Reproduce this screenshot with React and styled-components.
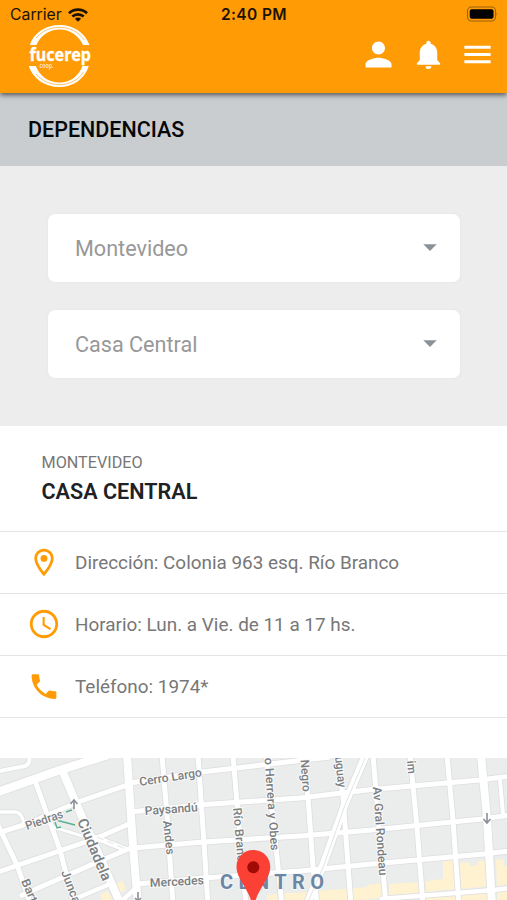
import styled, { createGlobalStyle } from 'styled-components'
import {
  MdAccessTime,
  MdArrowDropDown,
  MdMenu,
  MdNotifications,
  MdOutlineLocationOn,
  MdPerson,
  MdPhone
} from 'react-icons/md'

const GlobalStyle = createGlobalStyle`
  * {
    box-sizing: border-box;
  }

  body {
    margin: 0;
    background: #fff;
    font-family: Roboto, 'Liberation Sans', sans-serif;
  }
`

const Screen = styled.div`
  display: flex;
  flex-direction: column;
  width: 507px;
  height: 900px;
  overflow: hidden;
  background: #fff;
`

const Header = styled.header`
  position: relative;
  z-index: 1;
  height: 93px;
  flex-shrink: 0;
  background: #ff9b04;
  box-shadow: 0 2px 5px rgba(0, 0, 0, 0.6);
`

const StatusBar = styled.div`
  display: grid;
  grid-template-columns: 1fr auto 1fr;
  align-items: center;
  height: 29px;
  padding: 0 9px 0 10px;
  font-family: Inter, sans-serif;
  font-size: 15.8px;
  color: #1c1203;
`

const Carrier = styled.div`
  display: flex;
  align-items: center;
  gap: 6px;
`

const Clock = styled.div`
  font-size: 15.5px;
  font-weight: 600;
  letter-spacing: 0.4px;
`

const Battery = styled.svg`
  justify-self: end;
  margin-bottom: 2px;
`

const NavBar = styled.nav`
  display: flex;
  align-items: center;
  justify-content: space-between;
  height: 50px;
  padding: 0 12.5px 0 26px;
  color: #fff;
`

const LogoMark = styled.svg`
  margin-top: 4px;
  overflow: visible;
`

const NavIcons = styled.div`
  display: flex;
  align-items: center;
  gap: 13.5px;

  svg {
    display: block;
  }
`

const TitleBar = styled.div`
  display: flex;
  align-items: center;
  height: 73px;
  flex-shrink: 0;
  padding: 0 28px;
  background: #cacdd0;
`

const PageTitle = styled.h1`
  margin: 0;
  font-size: 21.5px;
  line-height: 25px;
  font-weight: 500;
  color: #060708;
`

const Filters = styled.section`
  display: flex;
  flex-direction: column;
  gap: 28px;
  height: 260px;
  flex-shrink: 0;
  padding: 48px 47px 0 48px;
  background: #ededed;
`

const Select = styled.div`
  display: flex;
  align-items: center;
  justify-content: space-between;
  height: 68px;
  padding: 0 14px 0 27px;
  border-radius: 7px;
  background: #fff;
  box-shadow: 0 0 3px rgba(0, 0, 0, 0.05);
  font-size: 21.6px;
  color: #989898;

  svg {
    margin-bottom: 2px;
    color: #8b9297;
  }
`

const BranchHeading = styled.div`
  height: 106px;
  flex-shrink: 0;
  padding: 27px 41.5px 0;
  border-bottom: 1px solid #e4e4e4;
`

const City = styled.div`
  font-size: 16.2px;
  line-height: 20px;
  color: #777;
`

const BranchName = styled.h2`
  margin: 5px 0 0;
  font-size: 21.6px;
  line-height: 28px;
  font-weight: 600;
  color: #202124;
`

const InfoRow = styled.div`
  display: flex;
  align-items: center;
  height: 62px;
  flex-shrink: 0;
  padding: 0 0 1px 27px;
  border-bottom: 1px solid #e4e4e4;
  font-size: 18.9px;
  color: #777;

  svg {
    width: 34px;
    margin-right: 14px;
    color: #ff9b04;
  }
`

const Map = styled.svg`
  display: block;
  flex-shrink: 0;
  margin-top: 40px;
  font-family: Roboto, sans-serif;
`

const branch = { city: 'Montevideo', name: 'Casa Central' }

const info = [
  { icon: MdOutlineLocationOn, size: 33, text: 'Dirección: Colonia 963 esq. Río Branco' },
  { icon: MdAccessTime, size: 34, text: 'Horario: Lun. a Vie. de 11 a 17 hs.' },
  { icon: MdPhone, size: 33, text: 'Teléfono: 1974*' }
]

const roads = [
  // main avenues
  { w: 8.5, d: 'M-5 793 L60 770 L108 755' },
  { w: 8, d: 'M62 770 L76 803 L121 905' },
  { w: 8, d: 'M127 755 L133 846 L138 905' },
  { w: 8, d: 'M481 755 L487 818 L492 905' },
  // west side
  { w: 4, d: 'M-5 772 L25 766 Q31 764 29 755' },
  { w: 5, d: 'M34 778 L60 850 L74 905' },
  { w: 5, d: 'M-2 825 L17 865 L31 905' },
  { w: 5, d: 'M-5 834 L27 824 L78 802 L133 783' },
  { w: 3.5, d: 'M-5 812 L16 812 Q22 813 24 824' },
  { w: 5, d: 'M-5 873 L97 838 L131 823' },
  { w: 5, d: 'M20 896 L93 864 L133 847' },
  { w: 4.5, d: 'M72 900 L110 884' },
  { w: 4.5, d: 'M123 900 L138 886' },
  { w: 3, d: 'M53 827 L92 839' },
  { w: 5.5, d: 'M94 837 L127 850' },
  // west-east streets
  { w: 5, d: 'M130 783 L202 772 L270 764 L330 757' },
  { w: 5, d: 'M130 812 L198 805 L300 798 L367 790 L480 780 L510 776' },
  { w: 5, d: 'M133 848 L203 842 L300 836 L372 830 L482 819 L510 815' },
  { w: 5, d: 'M137 884 L203 878 L300 871 L372 864 L484 854 L510 851' },
  { w: 4.5, d: 'M380 899 L494 890 L510 888' },
  // north-south streets
  { w: 5, d: 'M162 755 L167 815 L173 905' },
  { w: 5, d: 'M198 755 L204 843 L208 905' },
  { w: 5, d: 'M233 755 L237 803 L246 905' },
  { w: 5, d: 'M266 755 L275 838 L282 905' },
  { w: 5, d: 'M303 755 L308 797 L313 867 L317 905' },
  { w: 5, d: 'M338 755 L343 797 L348 865 L351 905' },
  { w: 7.5, d: 'M367 752 L345 804 L323 865 L307 905' },
  { w: 5, d: 'M373 755 L379 827 L386 905' },
  { w: 5, d: 'M410 755 L417 827 L423 905' },
  { w: 5, d: 'M447 755 L453 820 L459 905' },
  { w: 4, d: 'M500 780 L503 814' }
]

const plots = [
  'M100 895 L108 891 L112 900 L102 900 Z',
  'M116 885 L122 880 L126 889 L119 894 Z',
  'M267 895 L380 886 L380 898 L330 904 L267 905 Z',
  'M285 893 L300 893 L300 900 L285 900 Z',
  'M367 885 L384 883 L384 897 L367 898 Z',
  'M389 884 L419 882 L419 893 L389 895 Z',
  'M426 881 L443 879 L443 861 L455 860 L456 889 L426 892 Z',
  'M460 863 L469 862 L470 866 L478 865 L478 861 L487 860 L490 886 L461 889 Z',
  'M496 860 L504 859 L504 866 L510 866 L510 884 L497 886 Z',
  'M426 896 L456 893 L456 905 L426 905 Z',
  'M461 893 L490 891 L490 905 L461 905 Z',
  'M497 891 L510 890 L510 905 L497 905 Z'
]

const labels = [
  { text: 'Cerro Largo', x: 140, y: 786, r: -9, w: 63 },
  { text: 'Paysandú', x: 145, y: 815, r: -4, w: 53 },
  { text: 'Mercedes', x: 150, y: 887, r: -3, w: 54 },
  { text: 'Piedras', x: 27, y: 830, r: -19, w: 39 },
  { text: 'Ciudadela', x: 77, y: 821, r: 67, w: 66, size: 14.5 },
  { text: 'Juncal', x: 61, y: 872, r: 69, w: 38 },
  { text: 'Bartolomé', x: 21, y: 881, r: 67, w: 60 },
  { text: 'Andes', x: 163, y: 821, r: 84, w: 34 },
  { text: 'Río Branco', x: 233, y: 808, r: 85, w: 61 },
  { text: 'o Herrera y Obes', x: 264.5, y: 758, r: 86, w: 93 },
  { text: 'Negro', x: 300.5, y: 760, r: 86, w: 32 },
  { text: 'uguay', x: 335, y: 757, r: 84, w: 31 },
  { text: 'im', x: 407, y: 761, r: 85, w: 13 },
  { text: 'Av Gral Rondeau', x: 373, y: 787, r: 86, w: 89 }
]

const Logo = () => (
  <LogoMark width="68" height="66" viewBox="26 23 68 66" fill="none">
    <path d="M29.8 45 C34 32.5 46 25 60 25 C74 25 85 33 89.5 45 L83 45 C78.5 35.5 70 29.5 60 29.5 C49 29.5 40.5 35.5 36.5 45 Z" fill="#fff" />
    <path d="M36 38 C42 31 50 27.4 59 27.4 C70 27.4 79 32 84 40" stroke="#ff9b04" strokeWidth="0.6" />
    <path d="M28.8 66 C33 79 45 87 59.5 87 C73.5 87 84.5 79 88.8 66 L82.5 66 C78.5 76.5 70 82.5 59.5 82.5 C48.5 82.5 39.500 76 35.800 66 Z" fill="#fff" />
    <path d="M36 74 C42 81 50 84.6 59.5 84.6 C69 84.6 78 80.500 83.500 72" stroke="#ff9b04" strokeWidth="0.6" />
    <text
      x="29.5"
      y="61"
      fill="#fff"
      stroke="#fff"
      strokeWidth="0.3"
      fontFamily="'Noto Sans', sans-serif"
      fontSize="18.5"
      fontWeight="700"
      textLength="61.5"
      lengthAdjust="spacingAndGlyphs"
    >
      fucerep
    </text>
    <text
      x="39.5"
      y="67.5"
      fill="#fff"
      fontFamily="'Noto Sans', sans-serif"
      fontSize="7"
      fontWeight="600"
      fillOpacity="0.8"
      textLength="14"
      lengthAdjust="spacingAndGlyphs"
    >
      coop.
    </text>
  </LogoMark>
)

const Wifi = () => (
  <svg width="20" height="14" viewBox="0 0 20 14" fill="none" stroke="#1c1203" strokeWidth="2.7">
    <path d="M1 5.2 C6 0.3 14 0.3 19 5.2" />
    <path d="M4.3 8.6 C7.6 5.5 12.4 5.5 15.7 8.6" />
    <path d="M10 13.7 L6.9 10.7 C8.7 9.1 11.3 9.1 13.1 10.7 Z" fill="#1c1203" stroke="none" />
  </svg>
)

const BranchMap = () => (
  <Map width="507" height="142" viewBox="0 758 507 142">
    <rect x="0" y="758" width="507" height="142" fill="#ebecec" />
    {plots.map(d => (
      <path key={d} d={d} fill="#fef2d0" />
    ))}
    <g fill="none" stroke="#dddee0">
      {roads.map(road => (
        <path key={road.d} d={road.d} strokeWidth={road.w + 1.6} />
      ))}
    </g>
    <g fill="none" stroke="#fff">
      {roads.map(road => (
        <path key={road.d} d={road.d} strokeWidth={road.w} />
      ))}
    </g>
    <g fill="none" stroke="#e2e3e5">
      <path d="M366 756 L345 805 L324 865 L308 902" />
      <path d="M97 837 L126 849" strokeDasharray="7 4" />
    </g>
    <g fill="none" stroke="#58b195" strokeWidth="1.4">
      <path d="M75 825 L56 820 M66 812 L72 810" />
      <path d="M55 822 L57 828 L61 827" />
    </g>
    <g fill="none" stroke="#8c8d98" strokeWidth="1.6">
      <path d="M74 809 L74 800 M70.5 804 L74 800 L77.5 804" />
      <path d="M138 892 L138 902 M135 898 L138 901 L141 898" />
      <path d="M487 813 L487 822 M483.5 819 L487 823 L490.5 819" />
    </g>
    <g fill="#7b7e81" stroke="#fafafa" strokeWidth="2" paintOrder="stroke" fontWeight="500">
      {labels.map(label => (
        <text
          key={label.text}
          transform={`translate(${label.x} ${label.y}) rotate(${label.r})`}
          fontSize={label.size || 12}
          textLength={label.w}
          lengthAdjust="spacingAndGlyphs"
        >
          {label.text}
        </text>
      ))}
    </g>
    <text
      x="220"
      y="888.5"
      fill="#6c86a3"
      stroke="#f5f6f7"
      strokeWidth="2"
      paintOrder="stroke"
      fontSize="20"
      fontWeight="700"
      textLength="104"
    >
      CENTRO
    </text>
    <path
      d="M253.3 850 C243.5 850 236.5 857.5 236.5 867 C236.5 879 249 889 252 904 L254.6 904 C257.6 889 270.3 879 270.3 867 C270.3 857.5 263.2 850 253.3 850 Z"
      fill="#fb4135"
    />
    <circle cx="253.3" cy="867.3" r="6" fill="#a00b05" />
  </Map>
)

const App = () => {
  return (
    <Screen>
      <GlobalStyle />
      <Header>
        <StatusBar>
          <Carrier>
            Carrier
            <Wifi />
          </Carrier>
          <Clock>2:40 PM</Clock>
          <Battery width="32" height="16" viewBox="0 0 32 16">
            <rect x="1.5" y="1" width="28" height="14" rx="4" fill="none" stroke="#9a6313" strokeWidth="1.1" />
            <rect x="3.7" y="3.2" width="23.8" height="9.6" rx="2" fill="#000" />
            <path d="M30.6 6 Q32 8 30.6 10 Z" fill="#9a6313" />
          </Battery>
        </StatusBar>
        <NavBar>
          <Logo />
          <NavIcons>
            <MdPerson size={39} />
            <MdNotifications size={35} />
            <MdMenu size={35} />
          </NavIcons>
        </NavBar>
      </Header>

      <TitleBar>
        <PageTitle>DEPENDENCIAS</PageTitle>
      </TitleBar>

      <Filters>
        <Select>
          {branch.city}
          <MdArrowDropDown size={32} />
        </Select>
        <Select>
          {branch.name}
          <MdArrowDropDown size={32} />
        </Select>
      </Filters>

      <BranchHeading>
        <City>{branch.city.toUpperCase()}</City>
        <BranchName>{branch.name.toUpperCase()}</BranchName>
      </BranchHeading>

      {info.map(({ icon: Icon, size, text }) => (
        <InfoRow key={text}>
          <Icon size={size} />
          {text}
        </InfoRow>
      ))}

      <BranchMap />
    </Screen>
  )
}

export default App
